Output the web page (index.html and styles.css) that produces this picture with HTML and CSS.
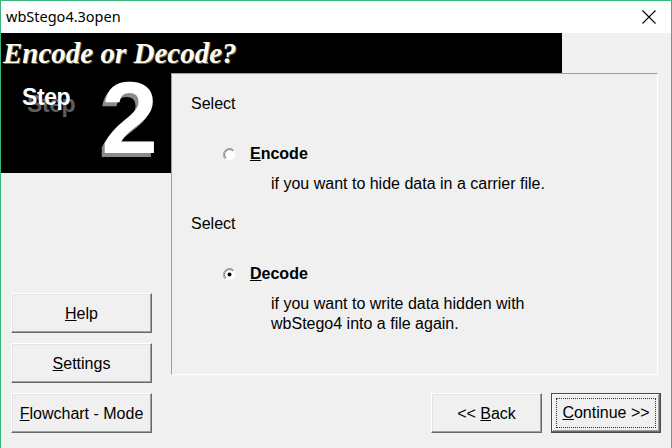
FILE: index.html
```html
<!DOCTYPE html>
<html>
<head>
<meta charset="utf-8">
<link rel="stylesheet" href="styles.css">
</head>
<body>
<div class="window">
  <div class="titlebar">
    <span class="title">wbStego4.3open</span>
    <svg class="close" width="14" height="14" viewBox="0 0 14 14"><path d="M0.5 0.5 L13.5 13.5 M13.5 0.5 L0.5 13.5" stroke="#000" stroke-width="1.1" fill="none"/></svg>
  </div>
  <div class="banner">
    <div class="banner-black"><span class="heading">Encode or Decode?</span></div>
    <div class="banner-rest"></div>
  </div>
  <div class="main">
    <div class="left">
      <div class="stepbox">
        <span class="step">Step</span>
        <span class="num">2</span>
      </div>
      <div class="leftbuttons">
        <div class="btn"><span><u>H</u>elp</span></div>
        <div class="btn"><span><u>S</u>ettings</span></div>
        <div class="btn"><span><u>F</u>lowchart - Mode</span></div>
      </div>
    </div>
    <div class="right">
      <div class="panel">
        <div class="select first">Select</div>
        <div class="option">
          <svg class="radio" width="13" height="13" viewBox="0 0 13 13">
            <circle cx="6.5" cy="6.5" r="6" fill="#fff"/>
            <path d="M11 2.2 A6 6 0 1 0 2.2 11" stroke="#a0a0a0" stroke-width="1" fill="none"/>
            <path d="M10 3 A4.8 4.8 0 1 0 3 10" stroke="#696969" stroke-width="1" fill="none"/>
          </svg>
          <span class="label"><u>E</u>ncode</span>
        </div>
        <div class="desc">if you want to hide data in a carrier file.</div>
        <div class="select">Select</div>
        <div class="option">
          <svg class="radio" width="13" height="13" viewBox="0 0 13 13">
            <circle cx="6.5" cy="6.5" r="6" fill="#fff"/>
            <path d="M11 2.2 A6 6 0 1 0 2.2 11" stroke="#a0a0a0" stroke-width="1" fill="none"/>
            <path d="M10 3 A4.8 4.8 0 1 0 3 10" stroke="#696969" stroke-width="1" fill="none"/>
            <circle cx="6.5" cy="6.5" r="2" fill="#000"/>
          </svg>
          <span class="label"><u>D</u>ecode</span>
        </div>
        <div class="desc">if you want to write data hidden with<br>wbStego4 into a file again.</div>
      </div>
      <div class="nav">
        <div class="btn back"><span>&lt;&lt; <u>B</u>ack</span></div>
        <div class="btn continue"><div class="focus"><span><u>C</u>ontinue &gt;&gt;</span></div></div>
      </div>
    </div>
  </div>
</div>
</body>
</html>
```

FILE: styles.css
```css
* { box-sizing: border-box; }
html, body { margin: 0; padding: 0; }
body {
  width: 672px;
  height: 448px;
  overflow: hidden;
  background: #f0f0f0;
  font-family: "Liberation Sans", Arial, sans-serif;
}
.window {
  width: 672px;
  height: 448px;
  border: 1px solid #3ab47a;
  border-bottom: none;
  background: #f0f0f0;
  display: flex;
  flex-direction: column;
}
.titlebar {
  height: 32px;
  background: #fff;
  display: flex;
  align-items: center;
  justify-content: space-between;
  padding: 0 15px 0 5px;
  flex: none;
}
.title {
  font-family: "Noto Sans", "Open Sans", sans-serif;
  font-size: 14.5px;
  color: #000;
  position: relative;
  top: -1px;
}
.close { display: block; }
.banner {
  height: 40px;
  display: flex;
  flex: none;
}
.banner-black {
  width: 561px;
  background: #000;
  display: flex;
  align-items: center;
  padding-left: 2px;
}
.heading {
  font-family: "Liberation Serif", "Times New Roman", serif;
  font-weight: bold;
  font-style: italic;
  font-size: 29px;
  color: #fffdf0;
  text-shadow: 1px 1px 0 #6b6550;
}
.banner-rest { flex: 1; }
.main {
  flex: 1;
  display: flex;
}
.left {
  width: 170px;
  display: flex;
  flex-direction: column;
  flex: none;
}
.stepbox {
  height: 100px;
  background: #000;
  display: flex;
  align-items: flex-start;
  padding: 0 0 0 21px;
}
.step {
  font-weight: bold;
  font-size: 23px;
  color: #fff;
  text-shadow: 5px 7px 0 #5e5e5e;
  letter-spacing: -0.4px;
  line-height: 30px;
  margin-top: 9px;
}
.num {
  font-weight: bold;
  font-size: 102px;
  line-height: 90px;
  color: #fff;
  margin-left: 31px;
  text-shadow: -3px 4px 0 #8a8a8a;
}
.leftbuttons {
  margin-top: auto;
  padding: 0 0 15px 10px;
  display: flex;
  flex-direction: column;
  gap: 10px;
}
.btn {
  height: 40px;
  background: #f0f0f0;
  border-top: 1px solid #fff;
  border-left: 1px solid #fff;
  border-right: 1px solid #696969;
  border-bottom: 1px solid #696969;
  box-shadow: inset -1px -1px 0 #a0a0a0, inset 1px 1px 0 #e3e3e3;
  display: flex;
  align-items: center;
  justify-content: center;
  font-size: 16px;
  color: #000;
  padding-top: 1px;
}
.leftbuttons .btn { width: 141px; }
.right {
  flex: 1;
  display: flex;
  flex-direction: column;
}
.panel {
  width: 487px;
  height: 302px;
  border-top: 1px solid #a0a0a0;
  border-left: 1px solid #a0a0a0;
  border-right: 1px solid #fff;
  border-bottom: 1px solid #fff;
  padding-left: 19px;
  font-size: 16px;
  line-height: 20px;
  color: #000;
}
.select { margin-top: 20px; }
.option {
  margin-top: 30px;
  display: flex;
  align-items: center;
  padding-left: 32px;
}
.radio { display: block; flex: none; }
.label {
  font-weight: bold;
  margin-left: 14px;
}
.desc {
  margin-top: 10px;
  padding-left: 80px;
}
.nav {
  margin-top: 18px;
  display: flex;
  justify-content: flex-end;
  gap: 9px;
  padding-right: 10px;
}
.back { width: 111px; }
.continue {
  width: 110px;
  border: 1px solid #4a4a4a;
  box-shadow: inset -1px -1px 0 #696969, inset 1px 1px 0 #fff, inset -2px -2px 0 #a0a0a0;
  padding: 4px;
  align-items: stretch;
  justify-content: stretch;
}
.focus {
  flex: 1;
  border: 1px dotted #333;
  display: flex;
  align-items: center;
  justify-content: center;
}
```
